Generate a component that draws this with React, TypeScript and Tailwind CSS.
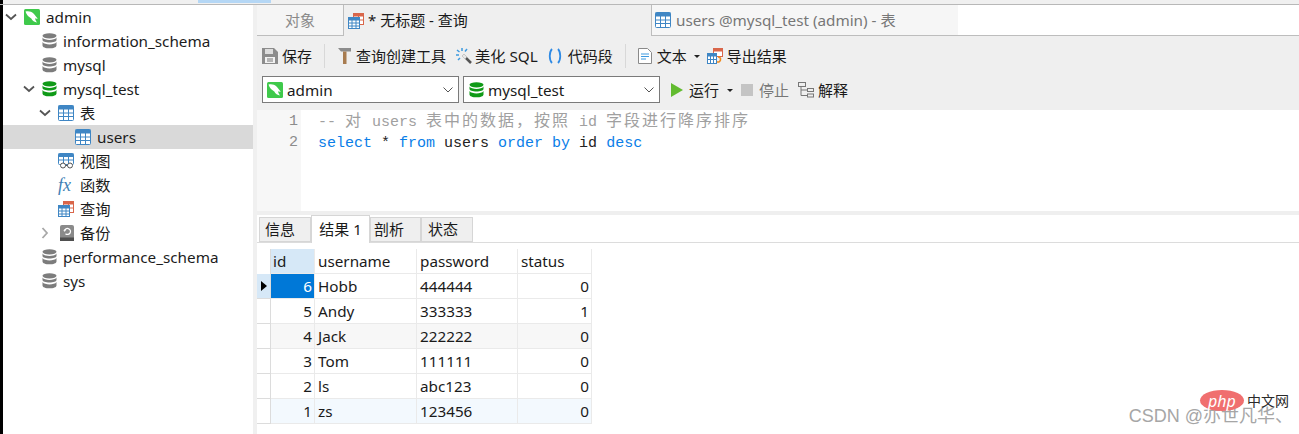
const sans = "font-['Noto_Sans','Noto_Sans_CJK_SC',sans-serif]";

function Chevron({ open, gray }: { open?: boolean; gray?: boolean }) {
  return (
    <svg width="12" height="12" viewBox="0 0 12 12" fill="none" stroke={gray ? '#a8a8a8' : '#555'} strokeWidth="1.8" className="shrink-0">
      {open ? <path d="M1 3.500 6 8l5-4.500" /> : <path d="M3.500 1 8 6l-4.500 5" />}
    </svg>
  );
}

function Dolphin({ size = 16 }: { size?: number }) {
  return (
    <svg width={size} height={size} viewBox="0 0 16 16" className="shrink-0">
      <rect width="16" height="16" rx="1.5" fill="#3fc94b" />
      <path d="M1.500 2.500c3-.8 6 0 8 2 1.600 1.600 2.600 3.600 4.200 5-1 .4-1.800.2-2.600-.3.200 1.600.9 3.100 2 4.300-2.600-.5-4.800-1.800-5.800-4C6 8.500 4.500 7.600 3.400 6.200 2.600 5.200 1.900 3.800 1.500 2.500z" fill="#fff" />
    </svg>
  );
}

function Db({ green }: { green?: boolean }) {
  const c = green ? '#0f9a17' : '#7c7c7c';
  return (
    <svg width="15" height="16" viewBox="0 0 15 16" className="shrink-0">
      <ellipse cx="7.500" cy="2.800" rx="7" ry="2.600" fill={c} />
      <path d="M.5 4.500c1 1.800 4 2.400 7 2.400s6-.6 7-2.400v2.500c0 1.500-3.100 2.500-7 2.500s-7-1-7-2.500z" fill={c} />
      <path d="M.5 9c1 1.800 4 2.400 7 2.400s6-.6 7-2.400v3.400c0 1.700-3.100 2.900-7 2.900s-7-1.200-7-2.900z" fill={c} />
    </svg>
  );
}

function Grid({ size = 16 }: { size?: number }) {
  return (
    <svg width={size} height={size} viewBox="0 0 16 16" className="shrink-0">
      <rect x="0.500" y="0.500" width="15" height="15" rx="1" fill="#fff" stroke="#3f86c4" />
      <rect x="0.500" y="0.500" width="15" height="4" fill="#3f86c4" />
      <path d="M5.500 4v11M10.500 4v11M1 8h14M1 11.500h14" stroke="#3f86c4" />
    </svg>
  );
}

function ViewIcon() {
  return (
    <svg width="16" height="16" viewBox="0 0 16 16" className="shrink-0">
      <rect x="0.500" y="0.500" width="15" height="11" rx="1" fill="#fff" stroke="#3f86c4" />
      <rect x="0.500" y="0.500" width="15" height="3.500" fill="#3f86c4" />
      <path d="M5.500 4v6M10.500 4v6M1 7h14" stroke="#3f86c4" />
      <circle cx="5" cy="12.500" r="2.500" fill="#fff" stroke="#555" />
      <circle cx="12" cy="12.500" r="2.500" fill="#fff" stroke="#555" />
      <path d="M7.500 12.500h2" stroke="#555" />
    </svg>
  );
}

function QueryIcon({ size = 16 }: { size?: number }) {
  return (
    <svg width={size} height={size} viewBox="0 0 16 16" className="shrink-0">
      <rect x="5.500" y="0.500" width="10" height="11" fill="#fff" stroke="#d9664a" />
      <rect x="5.500" y="0.500" width="10" height="3" fill="#d9664a" />
      <path d="M10.500 3v8M6 7h9" stroke="#d9664a" />
      <rect x="0.500" y="4.500" width="11" height="11" fill="#fff" stroke="#3f86c4" />
      <rect x="0.500" y="4.500" width="11" height="3" fill="#3f86c4" />
      <path d="M4 7v8M8 7v8M1 10h10M1 13h10" stroke="#3f86c4" />
    </svg>
  );
}

function BackupIcon() {
  return (
    <svg width="14" height="16" viewBox="0 0 14 16" className="shrink-0">
      <rect width="14" height="16" rx="2" fill="#8a8a8a" />
      <rect y="12.500" width="14" height="3.500" fill="#4f4f4f" />
      <path d="M4.500 6.500a3 3 0 1 1 1 2.200" fill="none" stroke="#fff" strokeWidth="1.200" />
      <path d="M3 5.500h3v-2z" fill="#fff" />
    </svg>
  );
}

function Caret() {
  return <span className="ml-[2px] h-0 w-0 border-x-[3px] border-t-[3px] border-x-transparent border-t-[#222]" />;
}

function ToolItem({ icon, label, caret, muted, className }: { icon: React.ReactNode; label: string; caret?: boolean; muted?: boolean; className?: string }) {
  return (
    <div className={`flex items-center ${className ?? ''}`}>
      {icon}
      <span className={muted ? 'text-[#777]' : 'text-[#1a1a1a]'}>{label}</span>
      {caret && <Caret />}
    </div>
  );
}

function TreeRow({ pad, chevron, icon, label, selected }: { pad: string; chevron?: React.ReactNode; icon: React.ReactNode; label: string; selected?: boolean }) {
  return (
    <div className={`flex h-6 items-center gap-[6px] ${pad} ${selected ? 'bg-[#d9d9d9]' : ''}`}>
      {chevron && <span className="flex w-[13px] shrink-0">{chevron}</span>}
      {icon}
      <span className="text-[#1c1c1c]">{label}</span>
    </div>
  );
}

function Sidebar() {
  return (
    <aside className="flex w-[253px] shrink-0 flex-col border-l-[3px] border-black bg-white text-[15.250px] leading-6">
      <TreeRow pad="pl-[2px]" chevron={<Chevron open />} icon={<Dolphin />} label="admin" />
      <TreeRow pad="pl-[39px]" icon={<Db />} label="information_schema" />
      <TreeRow pad="pl-[39px]" icon={<Db />} label="mysql" />
      <TreeRow pad="pl-[20px]" chevron={<Chevron open />} icon={<Db green />} label="mysql_test" />
      <TreeRow pad="pl-[36px]" chevron={<Chevron open />} icon={<Grid />} label="表" />
      <TreeRow pad="pl-[72px]" icon={<Grid />} label="users" selected />
      <TreeRow pad="pl-[55px]" icon={<ViewIcon />} label="视图" />
      <TreeRow pad="pl-[55px]" icon={<span className="w-4 shrink-0 font-['Liberation_Serif',serif] text-[18px] italic text-[#3f7fb5]">fx</span>} label="函数" />
      <TreeRow pad="pl-[55px]" icon={<QueryIcon />} label="查询" />
      <TreeRow pad="pl-[36px]" chevron={<Chevron gray />} icon={<span className="flex w-4 justify-end"><BackupIcon /></span>} label="备份" />
      <TreeRow pad="pl-[39px]" icon={<Db />} label="performance_schema" />
      <TreeRow pad="pl-[39px]" icon={<Db />} label="sys" />
    </aside>
  );
}

function Tabs() {
  return (
    <div className="flex h-[31px] items-stretch text-[15.250px]">
      <div className="flex w-[87px] items-center justify-center border-r border-b border-[#bdbdbd] bg-[#f5f5f5] text-[15px] text-[#8a8a8a]">对象</div>
      <div className="flex w-[307px] items-center gap-[4px] bg-[#efefef] pl-[4px] text-[15px] text-[#1a1a1a]">
        <QueryIcon size={16} />
        <span>* 无标题 - 查询</span>
      </div>
      <div className="flex w-[307px] items-center gap-[5px] border-l border-b border-[#bdbdbd] bg-[#f6f6f6] pl-[3px] text-[#777]">
        <Grid />
        <span>users @mysql_test (admin) - 表</span>
      </div>
      <div className="flex-1 border-b border-[#bdbdbd] bg-white" />
    </div>
  );
}

function Toolbar() {
  return (
    <div className="flex h-[39px] items-center bg-[#efefef] pl-[5px] pt-[1px] text-[15px]">
      <ToolItem label="保存" className="gap-[4px]" icon={
        <svg width="16" height="16" viewBox="0 0 16 16"><path d="M0 0h12l4 4v12H0z" fill="#8c8c8c" /><rect x="3" y="1" width="8" height="5" fill="#ddd" /><rect x="3" y="9" width="10" height="6" fill="#f2f2f2" /><path d="M5 11h6M5 13h6" stroke="#777" /></svg>
      } />
      <div className="mx-[12px] h-6 w-px bg-[#d8d8d8]" />
      <ToolItem label="查询创建工具" className="gap-[5px]" icon={
        <svg width="14" height="16" viewBox="0 0 14 16"><path d="M1 0h13v3.500H4z" fill="#8c8c8c" /><rect x="6" y="3.500" width="3.500" height="12.500" fill="#a87c50" /></svg>
      } />
      <ToolItem label="美化 SQL" className="ml-[10px] gap-[3px] text-[15.250px]" icon={
        <svg width="16" height="16" viewBox="0 0 16 16"><path d="M7 7l8 8" stroke="#555" strokeWidth="2.500" /><path d="M7 7l3 3" stroke="#e8e8e8" strokeWidth="2.500" /><path d="M6 0v3M1 2l2.500 2M0 7h3M2 12l2-2M11 1 9 3.500" stroke="#3d9ae0" strokeWidth="1.500" /></svg>
      } />
      <ToolItem label="代码段" className="ml-[9px] gap-[5px]" icon={
        <svg width="16" height="16" viewBox="0 0 16 16" fill="none" stroke="#2f8ae4" strokeWidth="1.800"><path d="M5 1C2 4 2 12 5 15" /><path d="M11 1c3 3 3 11 0 14" /></svg>
      } />
      <div className="mx-[12px] h-6 w-px bg-[#d8d8d8]" />
      <ToolItem label="文本" caret className="gap-[5px]" icon={
        <svg width="14" height="16" viewBox="0 0 14 16"><path d="M.5.500h9l4 4v11H.5z" fill="#fff" stroke="#8a8a8a" /><path d="M3 6h8M3 8.500h8M3 11h5" stroke="#3d9ae0" /></svg>
      } />
      <ToolItem label="导出结果" className="ml-[7px] gap-[4px]" icon={
        <svg width="16" height="16" viewBox="0 0 16 16"><rect x="6.500" y="0.500" width="9" height="8" fill="#fff" stroke="#d9664a" /><rect x="6.500" y="0.500" width="9" height="3" fill="#d9664a" /><rect x="0.500" y="5.500" width="9" height="10" fill="#fff" stroke="#3f86c4" /><rect x="0.500" y="5.500" width="9" height="3" fill="#3f86c4" /><path d="M3.500 8v7M6.500 8v7M1 11.500h8" stroke="#3f86c4" /><path d="M11 9c3 0 3.500 3 1 5h-2" fill="none" stroke="#f08a1d" strokeWidth="1.600" /></svg>
      } />
    </div>
  );
}

function Combo({ pad, icon, label }: { pad: string; icon: React.ReactNode; label: string }) {
  return (
    <div className={`flex h-[27px] w-[197px] items-center gap-[4px] border border-[#7a7a7a] bg-white ${pad} pr-[5px]`}>
      {icon}
      <span className="flex-1 pt-px text-[15.250px] text-[#1a1a1a]">{label}</span>
      <svg width="10" height="6" viewBox="0 0 10 6" fill="none" stroke="#555"><path d="M.5.500 5 5 9.500.500" /></svg>
    </div>
  );
}

function RunBar() {
  return (
    <div className="flex h-[35px] items-start bg-[#efefef] pl-[5px] pt-[1px] text-[15px]">
      <Combo pad="pl-[4px]" icon={<Dolphin />} label="admin" />
      <div className="w-[4px]" />
      <Combo pad="pl-[5px]" icon={<Db green />} label="mysql_test" />
      <div className="ml-[11px] flex h-[27px] items-center pt-px">
        <ToolItem label="运行" caret className="gap-[6px]" icon={
          <svg width="12" height="14" viewBox="0 0 12 14"><path d="M0 0l12 7-12 7z" fill="#62bb2f" /></svg>
        } />
        <ToolItem label="停止" muted className="ml-[8px] gap-[6px]" icon={<span className="h-3 w-3 bg-[#c4c4c4]" />} />
        <ToolItem label="解释" className="ml-[9px] gap-[4px]" icon={
          <svg width="16" height="16" viewBox="0 0 16 16" fill="none" stroke="#777"><rect x="0.500" y="0.500" width="7" height="4" /><rect x="9.500" y="6.500" width="6" height="3" /><rect x="9.500" y="12" width="6" height="3" /><path d="M3 5v8.500h6.500M3 8h6.500" /></svg>
        } />
      </div>
    </div>
  );
}

function Editor() {
  return (
    <div className="flex h-[105px] border-b-4 border-[#efefef] font-['Liberation_Mono','Noto_Sans_CJK_SC',monospace] text-[15px] leading-[21px]">
      <div className="w-[44px] shrink-0 bg-[#f7f7f7] pt-[1px] pr-[3px] text-right text-[#8c8c8c]">
        <div>1</div>
        <div>2</div>
      </div>
      <div className="whitespace-pre pl-[17px] pt-[2px]">
        <div className="text-[#a0a0a0]">
          {'-- '}<span className="text-[16px] tracking-[2px]">对</span>{' users '}<span className="text-[16px] tracking-[2px]">表中的数据，按照</span>{' id '}<span className="text-[16px] tracking-[2px]">字段进行降序排序</span>
        </div>
        <div className="text-[#222]">
          <span className="text-[#0a7ee8]">select</span> * <span className="text-[#0a7ee8]">from</span> users <span className="text-[#0a7ee8]">order</span> <span className="text-[#0a7ee8]">by</span> id <span className="text-[#0a7ee8]">desc</span>
        </div>
      </div>
    </div>
  );
}

function ResultTabs() {
  const tab = 'flex h-[25px] items-center border border-[#d6d6d6] bg-[#efefef]';
  return (
    <div className="flex h-[28px] items-end border-b border-[#dcdcdc] pl-[2px] text-[15px] text-[#1a1a1a]">
      <div className={`${tab} w-[52px] pl-[5px]`}>信息</div>
      <div className="-mb-px flex h-[28px] w-[59px] items-center justify-center border border-b-0 border-[#d6d6d6] bg-white">结果 1</div>
      <div className={`${tab} w-[51px] pl-[3px]`}>剖析</div>
      <div className={`${tab} w-[52px] pl-[6px]`}>状态</div>
    </div>
  );
}

const rows = [
  { id: 6, username: 'Hobb', password: '444444', status: 0 },
  { id: 5, username: 'Andy', password: '333333', status: 1 },
  { id: 4, username: 'Jack', password: '222222', status: 0 },
  { id: 3, username: 'Tom', password: '111111', status: 0 },
  { id: 2, username: 'ls', password: 'abc123', status: 0 },
  { id: 1, username: 'zs', password: '123456', status: 0 },
];

const rowBg: Record<number, string> = { 4: 'bg-[#f7f7f7]', 1: 'bg-[#f3f9fe]' };

function ResultGrid() {
  const cols = 'grid grid-cols-[14px_44px_102px_101px_74px] w-[335px]';
  const cell = 'border-r border-b border-[#eaeaea] pl-[3px] pr-[2px] text-[15.250px] leading-[24px]';
  return (
    <div className="pt-[6px] text-[#1a1a1a]">
      <div className={cols}>
        <div className="border-r border-[#dcdcdc]" />
        <div className={`${cell} bg-[#d6e8f7] !pl-[2px]`}>id</div>
        <div className={cell}>username</div>
        <div className={cell}>password</div>
        <div className={cell}>status</div>
      </div>
      {rows.map((row, i) => (
        <div key={row.id} className={`${cols} h-[25px] ${rowBg[row.id] ?? ''}`}>
          <div className={`flex items-center border-r border-b border-[#dcdcdc] pl-[4px] ${i === 0 ? 'bg-[#d6e8f7]' : 'bg-white'}`}>
            {i === 0 && <span className="h-0 w-0 border-y-[5px] border-l-[6px] border-y-transparent border-l-black" />}
          </div>
          <div className={`${cell} text-right ${i === 0 ? 'bg-[#0078d7] text-white' : ''}`}>{row.id}</div>
          <div className={cell}>{row.username}</div>
          <div className={cell}>{row.password}</div>
          <div className={`${cell} text-right`}>{row.status}</div>
        </div>
      ))}
    </div>
  );
}

export default function App() {
  return (
    <div className={`relative h-[434px] w-[1299px] overflow-hidden bg-white ${sans}`}>
      <div className="h-[4px] border-l-[3px] border-black bg-[#f0f0f0]">
        <div className="ml-[195px] h-[3px] w-[73px] bg-[#b5d7f5]" />
      </div>
      <div className="h-px bg-[#b8b8b8]" />
      <div className="flex h-[429px]">
        <Sidebar />
        <div className="w-[4px] shrink-0 bg-[#f0f0f0]" />
        <main className="flex flex-1 flex-col">
          <Tabs />
          <Toolbar />
          <RunBar />
          <Editor />
          <ResultTabs />
          <ResultGrid />
        </main>
      </div>
      {/* watermarks */}
      <div className="absolute right-[6px] top-[404px] font-['Liberation_Sans','Noto_Sans_CJK_SC',sans-serif] text-[18px] leading-[24px] text-[#a6a6a6]">CSDN @亦世凡华、</div>
      <div className="absolute left-[1200px] top-[390px] flex items-center gap-[3px]">
        <span className="flex h-[21px] w-[44px] items-center justify-center rounded-[50%] bg-[#f06f6f] text-[16px] italic leading-none text-white">php</span>
        <span className="text-[14px] leading-[21px] text-[#2a2a2a]">中文网</span>
      </div>
    </div>
  );
}
